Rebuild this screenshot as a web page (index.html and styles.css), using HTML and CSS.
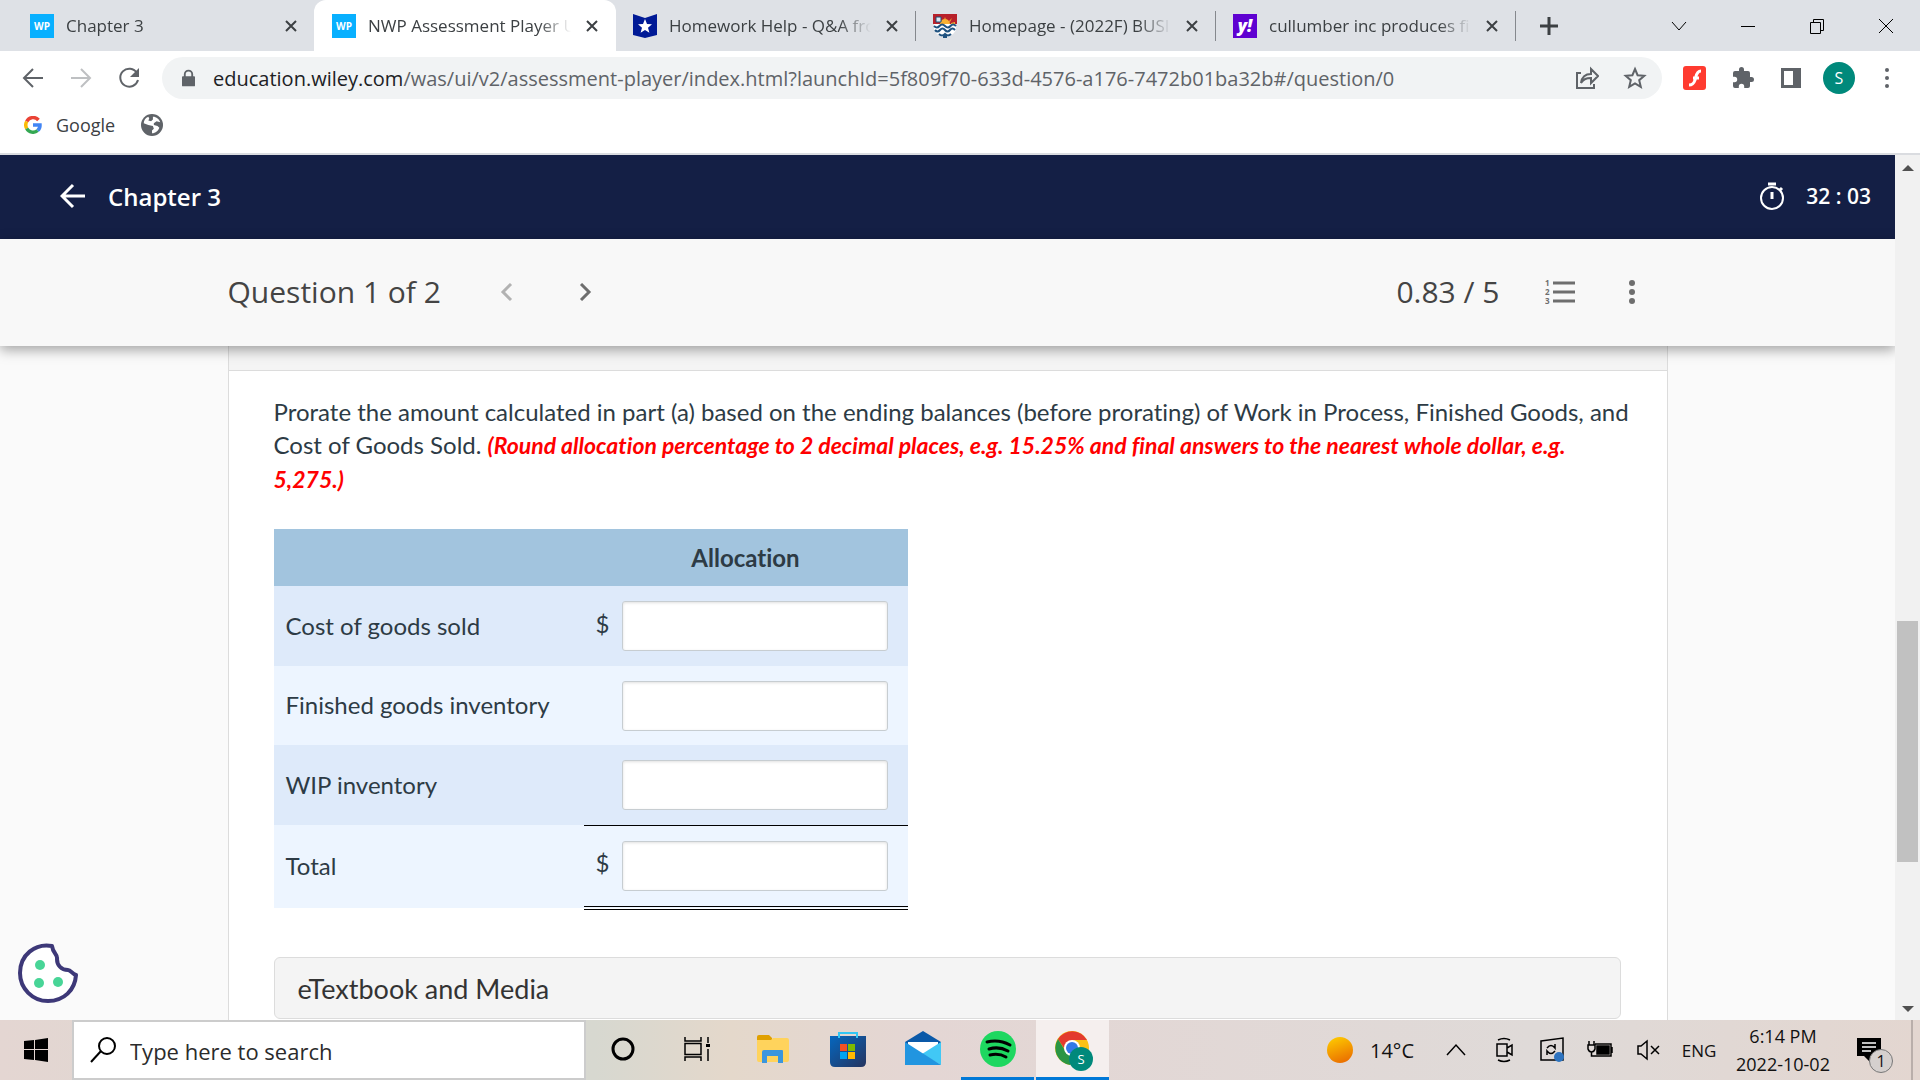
FILE: index.html
```html
<!DOCTYPE html>
<html lang="en">
<head>
    <meta charset="UTF-8">
    <meta name="viewport" content="width=device-width, initial-scale=1.0">
    <title>NWP Assessment Player UI</title>
    <link rel="stylesheet" href="styles.css">
</head>
<body>
    <!-- browser tabs -->
    <div class="tab-strip">
        <div class="tab">
            <span class="favicon wp">WP</span>
            <span class="tab-title">Chapter 3</span>
            <button class="tab-close" aria-label="Close tab"><svg width="14" height="14" viewBox="0 0 14 14"><path d="M2 2l10 10M12 2L2 12"/></svg></button>
        </div>
        <div class="tab active">
            <span class="favicon wp">WP</span>
            <span class="tab-title">NWP Assessment Player UI</span>
            <button class="tab-close" aria-label="Close tab"><svg width="14" height="14" viewBox="0 0 14 14"><path d="M2 2l10 10M12 2L2 12"/></svg></button>
        </div>
        <div class="tab divided">
            <svg class="favicon" viewBox="0 0 24 24"><path fill="#001a96" d="M0 0l12 4 12-4v21l-12 3-12-3z"/><path fill="#fff" d="M12 5l2 5 5 .3-4 3.4 1.400 5L12 16l-4.400 2.700 1.400-5-4-3.400 5-.3z"/></svg>
            <span class="tab-title">Homework Help - Q&amp;A from</span>
            <button class="tab-close" aria-label="Close tab"><svg width="14" height="14" viewBox="0 0 14 14"><path d="M2 2l10 10M12 2L2 12"/></svg></button>
        </div>
        <div class="tab divided">
            <svg class="favicon" viewBox="0 0 24 24"><path fill="#fff" d="M1 9h22v5c0 5-5 8-11 10C6 22 1 19 1 14z"/><path fill="#b8202a" d="M0 0h24v10H0z"/><path fill="#f9b233" d="M7 10a5 5 0 0 1 10 0zM12 3l1 3h-2zM19 4l-3 3 1 1zM22 8l-4 1v1h4z"/><path fill="#dce8f0" stroke="#1f4e79" d="M3 3h5v5H3z"/><path fill="none" stroke="#1f5280" stroke-width="2" d="M1 12q3 3 5.500 0t5.500 0 5.500 0 5.500 0M2 16q2.500 3 5 0t5 0 5 0 5 0M6 20q3 3 6 0 3 3 6 0M10 23h4"/></svg>
            <span class="tab-title">Homepage - (2022F) BUSI 2</span>
            <button class="tab-close" aria-label="Close tab"><svg width="14" height="14" viewBox="0 0 14 14"><path d="M2 2l10 10M12 2L2 12"/></svg></button>
        </div>
        <div class="tab divided">
            <span class="favicon yahoo">y!</span>
            <span class="tab-title">cullumber inc produces fin</span>
            <button class="tab-close" aria-label="Close tab"><svg width="14" height="14" viewBox="0 0 14 14"><path d="M2 2l10 10M12 2L2 12"/></svg></button>
        </div>
        <button class="new-tab" aria-label="New tab"><svg width="18" height="18" viewBox="0 0 18 18"><path stroke="#3c4043" stroke-width="3" d="M9 0v18M0 9h18"/></svg></button>
        <div class="window-buttons">
            <button aria-label="Search tabs"><svg width="16" height="16" viewBox="0 0 16 16"><path d="M1 4l7 8 7-8"/></svg></button>
            <button aria-label="Minimize"><svg width="16" height="16" viewBox="0 0 16 16"><path d="M1 8.500h14"/></svg></button>
            <button aria-label="Restore"><svg width="16" height="16" viewBox="0 0 16 16"><path d="M1.500 4.500h10v11h-10zM4.500 4.500v-3h10v11h-3"/></svg></button>
            <button aria-label="Close"><svg width="16" height="16" viewBox="0 0 16 16"><path d="M1 1l14 14M15 1L1 15"/></svg></button>
        </div>
    </div>

    <!-- address bar -->
    <div class="toolbar">
        <button class="tool" aria-label="Back"><svg viewBox="0 0 24 24"><path class="line" d="M22 12H4M12 3l-9 9 9 9"/></svg></button>
        <button class="tool faded" aria-label="Forward"><svg viewBox="0 0 24 24"><path class="line" d="M2 12h18M12 3l9 9-9 9"/></svg></button>
        <button class="tool" aria-label="Reload"><svg viewBox="0 0 24 24"><path class="line" d="M20 7a9 9 0 1 0 1 7"/><path d="M22 2v9h-9z"/></svg></button>
        <div class="omnibox">
            <svg class="lock" viewBox="0 0 14 18"><path d="M1 7h12a1 1 0 0 1 1 1v9a1 1 0 0 1-1 1H1a1 1 0 0 1-1-1V8a1 1 0 0 1 1-1z"/><path class="line" d="M3 8V5a4 4 0 0 1 8 0v3"/></svg>
            <span class="url"><b>education.wiley.com</b>/was/ui/v2/assessment-player/index.html?launchId=5f809f70-633d-4576-a176-7472b01ba32b#/question/0</span>
            <button class="tool" aria-label="Share"><svg viewBox="0 0 24 24"><path class="line" d="M6 7H2v15h17v-4M6 17c1-7 5-9 10-9V3l7 7-7 7v-5c-5 0-7 1-10 5z"/></svg></button>
            <button class="tool" aria-label="Bookmark"><svg viewBox="0 0 24 24"><path class="line" d="M12 3l2.600 6.200 6.700.6-5.100 4.400 1.600 6.600L12 17.300l-5.800 3.500 1.600-6.600-5.100-4.400 6.700-.6z"/></svg></button>
        </div>
        <button class="tool" aria-label="Flash"><svg viewBox="0 0 24 24"><rect width="23" height="24" rx="3" fill="#ff3b30"/><path d="M18 5c-5 0-5 6-6 9s-2 5-6 5M10 12h6" fill="none" stroke="#fff" stroke-width="3"/></svg></button>
        <button class="tool" aria-label="Extensions"><svg viewBox="0 0 24 24"><path d="M20.500 11H19V7a2 2 0 0 0-2-2h-4V3.500a2.500 2.500 0 0 0-5 0V5H4a2 2 0 0 0-2 2v3.800h1.500a2.700 2.700 0 0 1 0 5.400H2V20a2 2 0 0 0 2 2h3.800v-1.500a2.700 2.700 0 0 1 5.400 0V22H17a2 2 0 0 0 2-2v-4h1.500a2.500 2.500 0 0 0 0-5z"/></svg></button>
        <button class="tool" aria-label="Side panel"><svg viewBox="0 0 24 24"><path fill-rule="evenodd" d="M2 2h20v20H2zM5 5v14h9V5z"/></svg></button>
        <button class="tool" aria-label="Profile"><span class="avatar">S</span></button>
        <button class="tool" aria-label="Menu"><svg viewBox="0 0 24 24"><circle cx="12" cy="4" r="2"/><circle cx="12" cy="12" r="2"/><circle cx="12" cy="20" r="2"/></svg></button>
    </div>

    <div class="bookmarks">
        <a href="#">
            <svg width="18" height="18" viewBox="0 0 18 18" fill="none" stroke-width="3.500"><path stroke="#ea4335" d="M14.500 4A7.200 7.200 0 0 0 2.700 5.500"/><path stroke="#fbbc05" d="M2.700 5.500a7.200 7.200 0 0 0 0 7"/><path stroke="#34a853" d="M2.700 12.500a7.200 7.200 0 0 0 11 2"/><path stroke="#4285f4" d="M13.700 14.500A7 7 0 0 0 16 9H9"/></svg>
            Google
        </a>
        <a href="#" aria-label="Bookmark">
            <svg width="22" height="22" viewBox="0 0 24 24"><circle cx="12" cy="12" r="12" fill="#5f6368"/><path fill="#fff" d="M13 3c4 0 7 3 8 6l-4-1-3 2v2l4 1 2 2c-1 3-4 6-8 6v-3l2-2-1-3-5-1-5-2c0-3 2-6 5-7l1 2-1 2 3 1 2-2z"/></svg>
        </a>
    </div>

    <div class="page">
        <div class="app">
            <header class="app-bar">
                <button class="back" aria-label="Back"><svg width="26" height="26" viewBox="0 0 26 26"><path fill="none" stroke="#fff" stroke-width="3" d="M25 13H3M13 2L2 13l11 11"/></svg></button>
                <h1>Chapter 3</h1>
                <svg width="28" height="28" viewBox="0 0 28 28" fill="none" stroke="#fff" stroke-width="2"><circle cx="14" cy="16" r="11"/><path stroke-width="3" d="M10 2h8M14 10v7M22 8l2-2"/></svg>
                <span class="timer">32 : 03</span>
            </header>

            <div class="question-bar">
                <div class="wrap">
                    <h2>Question 1 of 2</h2>
                    <button class="nav prev" aria-label="Previous question"><svg width="18" height="18" viewBox="0 0 18 18"><path d="M13 1L5 9l8 8"/></svg></button>
                    <button class="nav next" aria-label="Next question"><svg width="18" height="18" viewBox="0 0 18 18"><path d="M5 1l8 8-8 8"/></svg></button>
                    <span class="score">0.83 / 5</span>
                    <button class="nav list" aria-label="Question list">
                        <svg width="30" height="26" viewBox="0 0 30 26"><path d="M8 4h22M8 13h22M8 22h22"/><text x="0" y="7">1</text><text x="0" y="16">2</text><text x="0" y="25">3</text></svg>
                    </button>
                    <button class="nav more" aria-label="More options"><svg width="8" height="26" viewBox="0 0 8 26"><circle cx="4" cy="4" r="3"/><circle cx="4" cy="13" r="3"/><circle cx="4" cy="22" r="3"/></svg></button>
                </div>
            </div>

            <main class="question">
                <div class="prev-part"></div>
                <div class="part">
                    <p>Prorate the amount calculated in part (a) based on the ending balances (before prorating) of Work in Process, Finished Goods, and Cost of Goods Sold. <em>(Round allocation percentage to 2 decimal places, e.g. 15.25% and final answers to the nearest whole dollar, e.g. 5,275.)</em></p>

                    <table>
                        <colgroup>
                            <col class="col-name">
                            <col class="col-sign">
                            <col>
                        </colgroup>
                        <thead>
                            <tr><th></th><th colspan="2">Allocation</th></tr>
                        </thead>
                        <tbody>
                            <tr>
                                <td class="name"><label for="cogs">Cost of goods sold</label></td>
                                <td class="sign">$</td>
                                <td><input type="text" id="cogs"></td>
                            </tr>
                            <tr>
                                <td class="name"><label for="finished">Finished goods inventory</label></td>
                                <td class="sign"></td>
                                <td><input type="text" id="finished"></td>
                            </tr>
                            <tr>
                                <td class="name"><label for="wip">WIP inventory</label></td>
                                <td class="sign"></td>
                                <td><input type="text" id="wip"></td>
                            </tr>
                            <tr class="total">
                                <td class="name"><label for="total">Total</label></td>
                                <td class="sign">$</td>
                                <td><input type="text" id="total"></td>
                            </tr>
                        </tbody>
                    </table>

                    <button class="etextbook">eTextbook and Media</button>
                </div>
            </main>

            <button class="cookie" aria-label="Cookie settings">
                <svg width="60" height="60" viewBox="0 0 60 60"><path fill="#fff" stroke="#3d3878" stroke-width="4" stroke-linejoin="round" d="M34 3C17 0 2 12 2 30a28 28 0 0 0 28 28c16 0 27-11 28-26-4-1-5-5-8-5-7 0-11-5-11-11 1-5-4-5-5-13z"/><g fill="#48d597"><circle cx="22" cy="22" r="5"/><circle cx="21" cy="40" r="5"/><circle cx="40" cy="39" r="5"/></g></svg>
            </button>
        </div>

        <div class="scrollbar">
            <svg width="12" height="6" viewBox="0 0 12 6"><path d="M0 6l6-6 6 6z"/></svg>
            <div class="track">
                <div class="above"></div>
                <div class="thumb"></div>
                <div class="below"></div>
            </div>
            <svg width="12" height="6" viewBox="0 0 12 6"><path d="M0 0l6 6 6-6z"/></svg>
        </div>
    </div>

    <!-- windows taskbar -->
    <footer class="taskbar">
        <button class="start" aria-label="Start"><svg width="24" height="24" viewBox="0 0 24 24"><path d="M0 3l10-1v9H0zM11 2l13-2v11H11zM0 12h10v10L0 21zM11 12h13v12l-13-2z"/></svg></button>
        <label class="search">
            <svg width="26" height="26" viewBox="0 0 26 26"><path fill="none" stroke="#000" stroke-width="2" d="M1 25l10-11"/><circle cx="17" cy="9" r="8" fill="none" stroke="#000" stroke-width="2"/></svg>
            <input type="text" placeholder="Type here to search" aria-label="Type here to search">
        </label>
        <div class="pinned">
            <button aria-label="Cortana"><svg viewBox="0 0 36 36"><circle cx="18" cy="18" r="10" fill="none" stroke="#000" stroke-width="3"/></svg></button>
            <button aria-label="Task view"><svg viewBox="0 0 36 36"><path fill="none" stroke="#000" stroke-width="1.500" d="M5 6v4h16V6M5 12.500h16v11H5zM5 30v-4h16v4M28 6v6M28 18v12"/><path d="M26 13h4v3h-4z"/></svg></button>
            <button aria-label="File Explorer"><svg viewBox="0 0 36 36"><path fill="#e0a000" d="M2 6q0-2 2-2h10l3 3v6H2z"/><path fill="#ffd35c" d="M2 9h14l2-2h14q2 0 2 2v20q0 2-2 2H4q-2 0-2-2z"/><path fill="#3b96dd" d="M9 19h18q1 0 1 1v12h-5v-7H12v7H7V21q0-2 2-2z"/></svg></button>
            <button aria-label="Microsoft Store"><svg viewBox="0 0 36 36"><defs><linearGradient id="store" x2="1" y2="1"><stop stop-color="#0567bf"/><stop offset="1" stop-color="#25345f"/></linearGradient></defs><path fill="url(#store)" d="M0 5h36v26q0 5-5 5H5q-5 0-5-5z"/><path fill="none" stroke="#32c6f4" stroke-width="2" d="M9 7V2h18v5"/><path fill="#f25022" d="M10 13h7v7h-7z"/><path fill="#7fba00" d="M18 13h7v7h-7z"/><path fill="#00a4ef" d="M10 21h7v7h-7z"/><path fill="#ffb900" d="M18 21h7v7h-7z"/></svg></button>
            <button aria-label="Mail"><svg viewBox="0 0 36 36"><path fill="#0b59a8" d="M0 11L18 0l18 11v4H0z"/><path fill="#fff" d="M3 11h30v4L18 26 3 15z"/><path fill="#41c8f5" d="M36 11v23L17 23z"/><path fill="#2195e0" d="M0 11l36 23H0z"/></svg></button>
            <button class="running" aria-label="Spotify"><svg viewBox="0 0 36 36"><circle cx="18" cy="18" r="18" fill="#1ed760"/><path fill="none" stroke="#000" stroke-width="3" stroke-linecap="round" d="M7 11q12-3 23 3M9 18q10-3 19 2M10 24q9-2 16 2"/></svg></button>
            <button class="running current" aria-label="Google Chrome">
                <svg viewBox="0 0 36 36"><circle cx="17" cy="17" r="17" fill="#fbc116"/><path fill="#e33b2e" d="M17 17h-8L3 8a17 17 0 0 1 29 1H17z"/><path fill="#2a9544" d="M3 8l8 13 9 3-5 10A17 17 0 0 1 3 8z"/><circle cx="17" cy="17" r="8" fill="#fff"/><circle cx="17" cy="17" r="6" fill="#3579e8"/></svg>
                <span class="badge">S</span>
            </button>
        </div>
        <div class="tray">
            <button class="weather"><span class="sun"></span>14°C</button>
            <button class="tray-icon" aria-label="Show hidden icons"><svg viewBox="0 0 26 26"><path d="M4 18l9-10 9 10"/></svg></button>
            <button class="tray-icon" aria-label="Meet now"><svg viewBox="0 0 26 26"><path d="M6 7h10v12H6zM16 11l5-3v10l-5-3M7 3q6-3 12 0M7 23q6 3 12 0"/></svg></button>
            <button class="tray-icon" aria-label="Updates"><svg viewBox="0 0 26 26"><path d="M2 4l22-3v22H2zM8 11q4-5 8 0V7M16 14q-4 5-8 0v4"/><circle cx="20" cy="20" r="5" fill="#2d73bf" stroke="none"/></svg></button>
            <button class="tray-icon" aria-label="Battery"><svg viewBox="0 0 26 26"><path d="M8 7h16v12H7M25 10v6M2 4v4M7 4v4M1 8h7v4q-1 3-3.500 3T1 12zM4.500 15v4H8"/><path fill="#000" d="M10 9h12v8H10z"/></svg></button>
            <button class="tray-icon" aria-label="Volume muted"><svg viewBox="0 0 26 26"><path d="M3 9h3l6-5v18l-6-5H3zM16 9l8 8M24 9l-8 8"/></svg></button>
            <button class="lang">ENG</button>
            <button class="clock"><span>6:14 PM</span><span>2022-10-02</span></button>
            <button class="notifications" aria-label="Notifications">
                <svg width="24" height="24" viewBox="0 0 24 24"><path d="M0 0h24v18H13v6l-6-6H0z"/><path stroke="#fff" stroke-width="1.500" d="M5 5h14M5 9h14M5 13h9"/></svg>
                <span class="count">1</span>
            </button>
            <span class="show-desktop"></span>
        </div>
    </footer>
</body>
</html>
```

FILE: styles.css
```css
:root {
    --ui-font: "Open Sans", "Noto Sans", sans-serif;
    --strip: #dee1e6;
    --icon: #5f6368;
    --navy: #141f45;
    --line: #dcdcdc;
}

* {
    box-sizing: border-box;
}

body {
    margin: 0;
    height: 100vh;
    display: flex;
    flex-direction: column;
    overflow: hidden;
    font-family: var(--ui-font);
    background: white;
}

button {
    display: flex;
    align-items: center;
    justify-content: center;
    padding: 0;
    border: none;
    background: none;
    font-family: inherit;
    color: inherit;
    cursor: pointer;
}

/* tabs */
.tab-strip {
    display: flex;
    align-items: center;
    height: 51px;
    padding-left: 14px;
    background: var(--strip);
    flex: none;
}

.tab {
    display: flex;
    align-items: center;
    width: 300px;
    height: 51px;
    padding: 0 16px;
    font-size: 17px;
    color: #3c4043;
}

.tab.active {
    width: 302px;
    padding: 0 17px 0 18px;
    background: white;
    border-radius: 12px 12px 0 0;
}

.tab.divided {
    padding: 0 17px;
    background: linear-gradient(#85888d, #85888d) right center / 1px 30px no-repeat;
}

.favicon {
    width: 24px;
    height: 24px;
    flex: none;
}

.wp,
.yahoo {
    display: flex;
    align-items: center;
    justify-content: center;
    font-size: 10px;
    font-weight: 700;
    color: white;
    background: #08b0ff;
}

.yahoo {
    font-size: 17px;
    font-style: italic;
    font-weight: 800;
    background: #5f01d1;
}

.tab-title {
    flex: 1;
    margin: 0 14px 0 12px;
    white-space: nowrap;
    overflow: hidden;
    -webkit-mask-image: linear-gradient(to right, #000 84%, transparent);
    mask-image: linear-gradient(to right, #000 84%, transparent);
}

.tab-close {
    width: 14px;
    height: 24px;
}

.tab-close path {
    stroke: #3c4043;
    stroke-width: 2;
}

.new-tab {
    width: 66px;
    height: 51px;
}

.window-buttons {
    display: flex;
    margin-left: auto;
    height: 42px;
}

.window-buttons button {
    width: 69px;
}

.window-buttons path {
    fill: none;
    stroke: #000;
}

/* toolbar */
.toolbar {
    display: flex;
    align-items: center;
    height: 54px;
    padding: 0 9px;
    flex: none;
}

.tool {
    width: 48px;
    height: 42px;
    flex: none;
}

.tool svg {
    width: 24px;
    height: 24px;
    fill: var(--icon);
}

.line {
    fill: none;
    stroke: var(--icon);
    stroke-width: 2;
}

.faded {
    opacity: 0.4;
}

.omnibox {
    display: flex;
    align-items: center;
    flex: 1;
    height: 42px;
    margin: 0 9px;
    padding: 0 3px 0 20px;
    border-radius: 21px;
    background: #f1f3f4;
}

.lock {
    width: 13px;
    height: 18px;
    fill: var(--icon);
}

.url {
    flex: 1;
    margin-left: 18px;
    font-size: 20px;
    color: #5f6368;
    white-space: nowrap;
    overflow: hidden;
}

.url b {
    font-weight: 400;
    color: #202124;
}

.avatar {
    width: 32px;
    height: 32px;
    border-radius: 50%;
    background: #00897b;
    color: white;
    font-size: 16px;
    line-height: 32px;
}

.bookmarks {
    display: flex;
    align-items: center;
    gap: 26px;
    height: 50px;
    padding: 0 24px 8px;
    border-bottom: 2px solid #dadce0;
    flex: none;
}

.bookmarks a {
    display: flex;
    align-items: center;
    gap: 14px;
    font-size: 18px;
    line-height: 24px;
    color: #3c4043;
    text-decoration: none;
}

/* page */
.page {
    display: flex;
    flex: 1;
    min-height: 0;
}

.app {
    position: relative;
    flex: 1;
    display: flex;
    flex-direction: column;
    overflow: hidden;
    background: #fafafa;
}

.app-bar {
    display: flex;
    align-items: center;
    height: 84px;
    padding: 0 24px 2px 60px;
    background: var(--navy);
    color: white;
    flex: none;
}

.app-bar h1 {
    flex: 1;
    margin: 0 0 0 22px;
    font-size: 24px;
    font-weight: 600;
}

.timer {
    margin-left: 20px;
    font-size: 21px;
    font-weight: 600;
}

.question-bar {
    position: relative;
    height: 107px;
    background: #f8f8f8;
    box-shadow: 0 4px 12px rgba(0,0,0,0.35);
    flex: none;
}

.wrap {
    display: flex;
    align-items: center;
    max-width: 1440px;
    height: 100%;
    margin: 0 auto;
    padding-bottom: 2px;
    font-size: 30px;
    color: #444;
}

.wrap h2 {
    margin: 0;
    font-size: 30px;
    font-weight: 400;
}

.nav {
    width: 48px;
    height: 48px;
}

.nav path {
    fill: none;
    stroke: #6e6e6e;
    stroke-width: 3;
}

.nav circle,
.nav text {
    fill: #6e6e6e;
}

.nav text {
    font-size: 8px;
    font-weight: 700;
}

.prev {
    margin: 0 30px 0 42px;
    opacity: 0.5;
}

.score {
    margin-left: auto;
}

.list {
    margin: 0 24px 0 36px;
}

.more {
    margin-right: 12px;
}

.question {
    width: 100%;
    max-width: 1440px;
    margin: 0 auto;
    border: 1px solid var(--line);
    border-width: 0 1px;
    background: white;
    font-family: Lato, sans-serif;
    font-size: 24px;
    font-variant-ligatures: none;
    line-height: 33px;
    color: #2d3b45;
    flex: 1;
    min-height: 0;
}

.prev-part {
    height: 25px;
    background: #f4f4f4;
    border-bottom: 1px solid var(--line);
}

.part {
    padding: 24px 46px 0 45px;
}

.part p {
    margin: 0 -12px 33px 0;
}

.part em {
    color: red;
    font-size: 23px;
    font-weight: 700;
}

table {
    width: 634px;
    border-collapse: collapse;
    table-layout: fixed;
}

.col-name {
    width: 310px;
}

.col-sign {
    width: 38px;
}

th {
    height: 57px;
    padding: 0;
    background: #a2c4de;
    font-weight: 700;
}

td {
    height: 80px;
    padding: 0;
    background: #deeafa;
}

tr:nth-child(even) td {
    height: 79px;
    background: #edf5ff;
}

td.name {
    padding: 0 0 2px 12px;
}

td.sign {
    padding: 0 0 6px 12px;
}

td input {
    display: block;
    width: 266px;
    height: 50px;
    padding: 0 12px;
    border: 1px solid #c7cdd1;
    border-radius: 3px;
    box-shadow: inset 0 1px 3px rgba(0,0,0,0.12);
    font: inherit;
}

tr.total:nth-child(even) td {
    height: 83px;
}

.total td:not(.name) {
    border-top: 1px solid #000;
    border-bottom: 4px double #000;
}

.etextbook {
    width: 100%;
    height: 62px;
    margin-top: 47px;
    padding: 0 23px;
    justify-content: flex-start;
    border: 1px solid var(--line);
    border-radius: 6px;
    background: #f4f4f4;
    font-size: 27px;
    font-variant-ligatures: none;
    color: #333;
}

.cookie {
    position: absolute;
    left: 18px;
    bottom: 17px;
}

.scrollbar {
    display: flex;
    flex-direction: column;
    align-items: center;
    width: 25px;
    padding: 10px 0 8px;
    background: #f1f1f1;
    fill: #505050;
}

.track {
    flex: 1;
    display: flex;
    flex-direction: column;
    width: 21px;
}

.above {
    flex: 450;
}

.thumb {
    flex: 241;
    background: #c1c1c1;
}

.below {
    flex: 144;
}

/* taskbar */
.taskbar {
    display: flex;
    height: 60px;
    background: linear-gradient(to right, #e4d6d2 0, #d7d8d0 31%, #e4d8cb 38%, #e4d6d4 48%, #dfdad8 80%, #e3d6d0);
    color: #111;
    flex: none;
}

.start {
    width: 72px;
}

.search {
    display: flex;
    align-items: center;
    width: 514px;
    padding: 0 16px;
    border: 2px solid #ccc;
    background: white;
}

.search input {
    flex: 1;
    margin-left: 14px;
    padding: 2px 0 0;
    border: none;
    outline: none;
    font-family: inherit;
    font-size: 22px;
}

.search input::placeholder {
    color: #2b2b2b;
}

.pinned {
    display: flex;
    gap: 2px;
}

.pinned button {
    position: relative;
    width: 73px;
    border-bottom: 3px solid transparent;
}

.pinned svg {
    width: 36px;
    height: 36px;
}

.pinned .running {
    border-bottom-color: #0078d7;
}

.pinned .current {
    background: #f5efee;
}

.badge {
    position: absolute;
    left: 33px;
    top: 27px;
    width: 24px;
    height: 24px;
    border-radius: 50%;
    background: #00897b;
    color: white;
    font-size: 13px;
    line-height: 24px;
}

.tray {
    display: flex;
    margin-left: auto;
    padding-right: 7px;
}

.weather {
    gap: 17px;
    padding-right: 18px;
    font-size: 20px;
}

.sun {
    width: 26px;
    height: 26px;
    border-radius: 50%;
    background: linear-gradient(160deg, #ffd000, #e86400);
}

.tray-icon {
    width: 48px;
}

.tray-icon svg {
    width: 26px;
    height: 26px;
    fill: none;
    stroke: #000;
    stroke-width: 1.5;
}

.lang {
    width: 54px;
    font-size: 17px;
}

.clock {
    flex-direction: column;
    width: 114px;
    font-size: 18px;
    line-height: 28px;
}

.notifications {
    position: relative;
    width: 58px;
}

.count {
    position: absolute;
    left: 29px;
    top: 29px;
    width: 24px;
    height: 24px;
    border: 1px solid #777;
    border-radius: 50%;
    background: #d5d0ce;
    font-size: 16px;
    line-height: 22px;
}

.show-desktop {
    width: 2px;
    margin-left: 13px;
    background: #b9aeaa;
}
```
